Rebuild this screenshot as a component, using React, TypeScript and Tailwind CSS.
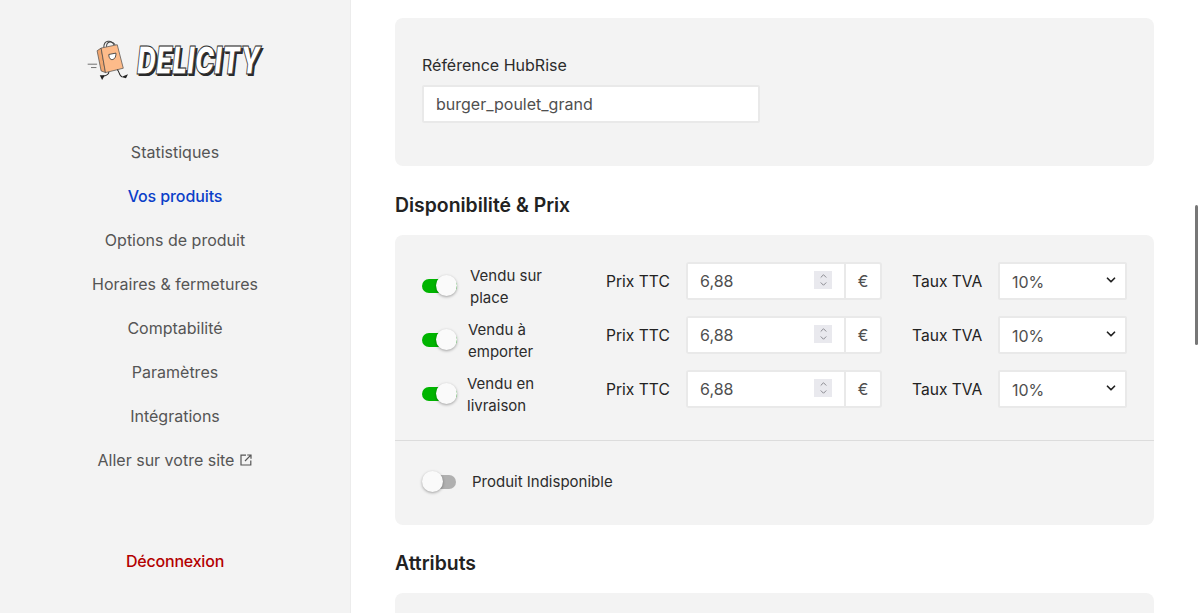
import { ChevronDown, ChevronUp } from 'lucide-react';

const navItems = ['Statistiques', 'Vos produits', 'Options de produit', 'Horaires & fermetures', 'Comptabilité', 'Paramètres', 'Intégrations'];

const rows = [
  { lines: ['Vendu sur', 'place'], labelClass: 'ml-[13px]' },
  { lines: ['Vendu à', 'emporter'], labelClass: 'ml-[11px]' },
  { lines: ['Vendu en', 'livraison'], labelClass: 'ml-[10px]' },
];

function Toggle({ on }: { on: boolean }) {
  return (
    <div className={`relative h-[14px] shrink-0 ${on ? 'w-[35px]' : 'w-[34px]'}`}>
      <div className={`h-[14px] rounded-full ${on ? 'bg-[#00b400]' : 'ml-[10px] bg-[#b0b0b0]'}`} />
      <div className={`absolute top-[-4px] h-[21px] w-[21px] rounded-full bg-[#fafafa] shadow-[0_1px_3px_rgba(0,0,0,0.35)] ${on ? 'right-0' : 'left-0'}`} />
    </div>
  );
}

function Logo() {
  return (
    <div className="-ml-[2px] flex h-[42px] items-center">
      <svg viewBox="50 55 125 125" className="h-[42px] w-[42px] shrink-0">
        <path d="M52 130H80M62 140H78" stroke="#333" strokeWidth="2" fill="none" />
        <path d="M100 80C100 58 122 56 130 72" stroke="#444" strokeWidth="3" fill="none" />
        <path d="M108 78C108 60 126 60 134 72" stroke="#444" strokeWidth="3" fill="none" />
        <path d="M80 90L92 82L105 155L92 150Z" fill="#f0a670" stroke="#444" strokeWidth="2" />
        <path d="M92 82L140 72L158 142L105 155Z" fill="#fdbb8a" stroke="#444" strokeWidth="2" />
        <path d="M115 101L136 97C137 110 130 118 122 116C117 114 115 108 115 101Z" fill="#fff" stroke="#333" strokeWidth="2.5" />
        <path d="M115 153C116 162 108 164 97 166M140 146C146 150 146 166 154 167" stroke="#222" strokeWidth="3" fill="none" />
        <path d="M88 163L103 163L95 177Z M152 168L172 160L166 172Z" fill="#222" />
      </svg>
      <span className="ml-[8px] w-[125px] origin-left scale-x-[0.69] whitespace-nowrap text-[38px] font-black italic leading-none text-white [-webkit-text-stroke:1px_#2a2a2a] [text-shadow:2px_2px_0_#2a2a2a,3px_2px_0_#2a2a2a]">
        DELICITY
      </span>
    </div>
  );
}

function SiteIcon() {
  return (
    <svg viewBox="0 0 12 12" className="h-3 w-3" fill="none" stroke="currentColor" strokeWidth="1.2">
      <path d="M6 1.2H1V11H10.8V6.5" />
      <path d="M5 7L10.8 1.2M7.2 1H11V4.8" />
    </svg>
  );
}

function Sidebar() {
  return (
    <aside className="flex h-full w-[351px] shrink-0 flex-col items-center border-r border-[#ececec] bg-[#f3f3f3] pt-[39px] text-[#555]">
      <Logo />
      <nav className="mt-[59px] flex flex-col items-center gap-5">
        {navItems.map((item) => (
          <a key={item} className={`h-6 leading-6 ${item === 'Vos produits' ? 'font-medium tracking-[-0.1px] text-[#0b3fc9]' : ''}`}>
            {item}
          </a>
        ))}
        <a className="flex h-6 items-center gap-[6px] leading-6">
          Aller sur votre site
          <SiteIcon />
        </a>
      </nav>
      <a className="mt-[77px] font-medium leading-6 tracking-[-0.2px] text-[#b30000]">Déconnexion</a>
    </aside>
  );
}

function PriceRow({ lines, labelClass }: { lines: string[]; labelClass: string }) {
  return (
    <div className="flex h-[54px] items-center text-[15.6px] text-[#222]">
      <div className="flex w-[184px] items-center">
        <div className="mt-[10px] flex">
          <Toggle on />
        </div>
        <div className={`${labelClass} mt-[12px] text-[15px] leading-[22px] text-[#2c2c2c]`}>
          {lines.map((line) => (
            <div key={line}>{line}</div>
          ))}
        </div>
      </div>
      <span className="mt-[1px] w-20">Prix TTC</span>
      <div className="flex h-[38px] w-[196px] rounded-[3px] border-2 border-[#e9e9e9] bg-white">
        <div className="relative w-[158px] border-r-2 border-[#e9e9e9]">
          <input defaultValue="6,88" className="h-full w-full bg-white pl-3 text-base text-[#4f4f4f] outline-none" />
          <div className="absolute right-[12px] top-[7px] flex h-[18px] w-[18px] flex-col items-center justify-center bg-[#e9e9ee] text-[#77777d]">
            <ChevronUp size={11} strokeWidth={2} className="-mb-[1px]" />
            <ChevronDown size={11} strokeWidth={2} className="-mt-[1px]" />
          </div>
        </div>
        <span className="flex flex-1 items-center justify-center text-base text-[#4f4f4f]">€</span>
      </div>
      <span className="ml-[30px] mt-[1px] w-[86px]">Taux TVA</span>
      <div className="relative h-[38px] w-[129px]">
        <select className="h-full w-full appearance-none rounded-[2px] border-2 border-[#e9e9e9] bg-white pl-3 pt-[1px] text-base text-[#4f4f4f] outline-none">
          <option>10%</option>
        </select>
        <ChevronDown size={14} strokeWidth={3} className="absolute right-[9px] top-[11px] text-[#222]" />
      </div>
    </div>
  );
}

export default function App() {
  return (
    <div className="relative flex h-[613px] w-full overflow-hidden bg-white font-['Inter','Noto_Sans',sans-serif] text-base">
      <Sidebar />
      <main className="ml-[44px] w-[759px] pt-[18px]">
        <section className="h-[148px] rounded-lg bg-[#f3f3f3] px-[27px] pt-[35px]">
          <label className="block leading-6 text-[#2c2c2c]">Référence HubRise</label>
          <input
            defaultValue="burger_poulet_grand"
            className="mt-2 h-[38px] w-[338px] rounded-[2px] border-2 border-[#e9e9e9] bg-white pl-3 text-[#4f4f4f] outline-none"
          />
        </section>

        <h2 className="mt-[25px] text-[19.4px] font-semibold leading-7 text-[#222]">Disponibilité & Prix</h2>
        <section className="mt-[16px] h-[290px] rounded-lg bg-[#f3f3f3]">
          <div className="px-[27px] pt-[19px]">
            {rows.map((row) => (
              <PriceRow key={row.lines[0]} {...row} />
            ))}
          </div>
          <div className="mt-[24px] border-t border-[#dcdcdc]" />
          <div className="flex h-[81px] items-center pl-[27px]">
            <Toggle on={false} />
            <span className="ml-[16px] mt-[1px] text-[15px] text-[#2c2c2c]">Produit Indisponible</span>
          </div>
        </section>

        <h2 className="mt-[24px] text-[19.4px] font-semibold leading-7 text-[#222]">Attributs</h2>
        <section className="mt-[16px] h-20 rounded-lg bg-[#f3f3f3]" />
      </main>
      <div className="absolute right-[1px] top-[205px] h-[140px] w-[3px] rounded-full bg-[#777]" />
    </div>
  );
}
